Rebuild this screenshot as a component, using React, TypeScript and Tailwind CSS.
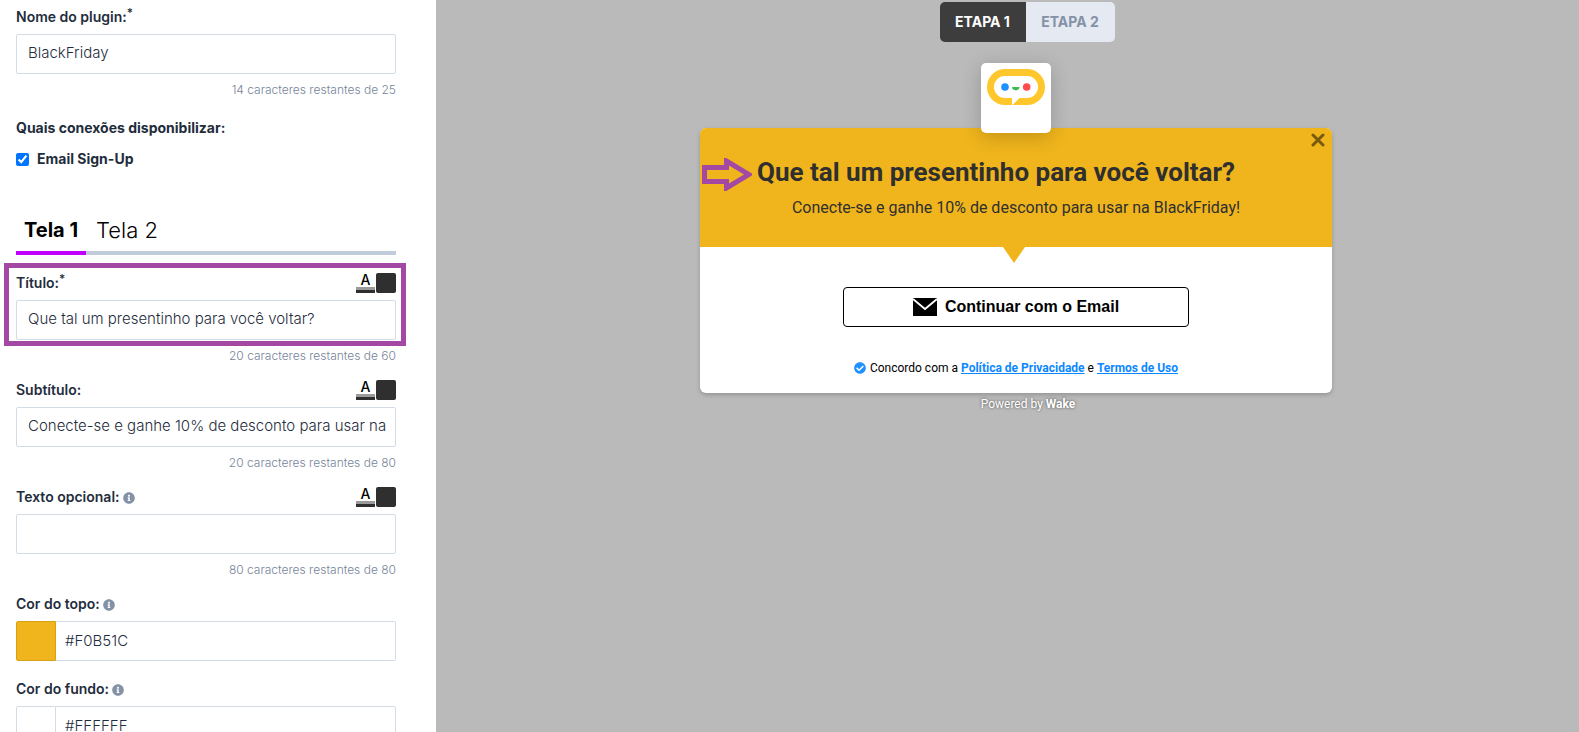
import React, { useState } from 'react'
import { FaInfoCircle, FaCheckCircle } from 'react-icons/fa'

interface TextFieldProps {
  id: string
  label: string
  value: string
  counter: string
  required?: boolean
  info?: boolean
  styled?: boolean
  highlighted?: boolean
}

interface ColorFieldProps {
  id: string
  label: string
  value: string
  swatchClass: string
}

const inputClass =
  'block h-10 w-full rounded-xs border border-[#d3dce6] bg-white pr-2 pb-1 pl-[11px] text-[15px] font-light text-[#1f2d3d] outline-none'

function FieldLabel({ id, label, required, info }: { id: string; label: string; required?: boolean; info?: boolean }) {
  return (
    <label htmlFor={id} className="flex items-center text-sm font-semibold text-[#1f2d3d]">
      {label}
      {required && <span className="mb-2 text-xs leading-none font-medium">*</span>}
      {info && <FaInfoCircle className="mt-px ml-[3px] h-3 w-3 text-[#8492a6]" />}
    </label>
  )
}

// Text color + background color pickers
function StyleButtons() {
  return (
    <div className="flex gap-px">
      <button aria-label="Cor do texto" className="flex h-5 w-[19px] flex-col items-center justify-end">
        <span className="text-sm leading-[14px] font-medium text-black">A</span>
        <span className="h-[3px] w-full shrink-0 bg-[#9b9b9b]" />
        <span className="h-[3px] w-full shrink-0 bg-[#2f2f2f]" />
      </button>
      <button aria-label="Cor" className="h-5 w-5 rounded-xs bg-[#2f2f2f]" />
    </div>
  )
}

function TextField({ id, label, value, counter, required, info, styled, highlighted }: TextFieldProps) {
  const [text, setText] = useState(value)

  return (
    <div className="relative mb-[14px]">
      <div className="mb-[7px] flex h-5 items-center justify-between">
        <FieldLabel id={id} label={label} required={required} info={info} />
        {styled && <StyleButtons />}
      </div>
      <input id={id} className={inputClass} value={text} onChange={(e) => setText(e.target.value)} />
      <p className="mt-[6px] h-5 text-right text-xs leading-5 font-light text-[#76849a]">{counter}</p>
      {highlighted && (
        <div className="pointer-events-none absolute -top-[10px] -right-[10px] -left-3 h-[83px] border-5 border-[#a349a4]" />
      )}
    </div>
  )
}

function ColorField({ id, label, value, swatchClass }: ColorFieldProps) {
  const [color, setColor] = useState(value)

  return (
    <div className="mb-[18px]">
      <div className="mb-[7px] flex h-5 items-center">
        <FieldLabel id={id} label={label} info />
      </div>
      <div className="flex h-10">
        <button aria-label={label} className={`w-10 shrink-0 rounded-l-xs border ${swatchClass}`} />
        <input
          id={id}
          className="h-10 min-w-0 flex-1 rounded-r-xs border border-l-0 border-[#d3dce6] bg-white px-[9px] pb-0.5 text-[15px] font-light text-[#1f2d3d] outline-none"
          value={color}
          onChange={(e) => setColor(e.target.value)}
        />
      </div>
    </div>
  )
}

function BotLogo() {
  return (
    <svg viewBox="0 0 58 36" className="h-9 w-[58px]" aria-hidden="true">
      <rect width="58" height="36" rx="18" fill="#ffc72c" />
      <rect x="7" y="7" width="44" height="22" rx="11" fill="#fff" />
      <path d="M25 28h8.500l-8.500 8.500z" fill="#fff" />
      <circle cx="18" cy="18" r="3.800" fill="#1e90ff" />
      <path d="M25 18h7.600c0 2-1.700 3.300-3.800 3.300S25 20 25 18z" fill="#3dbb4f" />
      <circle cx="39.700" cy="18" r="3.800" fill="#ff4b4b" />
    </svg>
  )
}

function Sidebar() {
  return (
    <aside className="w-[436px] shrink-0 overflow-hidden bg-white pt-[7px] pr-10 pl-4">
      <TextField
        id="nome"
        label="Nome do plugin:"
        value="BlackFriday"
        counter="14 caracteres restantes de 25"
        required
      />

      <fieldset className="mt-[18px]">
        <legend className="h-5 text-sm leading-5 font-bold text-[#1f2d3d]">Quais conexões disponibilizar:</legend>
        <label className="mt-[11px] flex h-5 items-center gap-2 text-sm font-bold text-[#1f2d3d]">
          <input type="checkbox" defaultChecked className="h-[13px] w-[13px]" />
          Email Sign-Up
        </label>
      </fieldset>

      <nav className="mt-11 mb-[18px] flex h-[42px] border-b-4 border-[#c0ccda] text-black">
        <button className="-mb-1 w-[70px] border-b-4 border-[#bf00ff] pb-1 text-xl font-bold">Tela 1</button>
        <button className="px-[10px] pb-1 text-[22px] font-light">Tela 2</button>
      </nav>

      <TextField
        id="titulo"
        label="Título:"
        value="Que tal um presentinho para você voltar?"
        counter="20 caracteres restantes de 60"
        required
        styled
        highlighted
      />
      <TextField
        id="subtitulo"
        label="Subtítulo:"
        value="Conecte-se e ganhe 10% de desconto para usar na"
        counter="20 caracteres restantes de 80"
        styled
      />
      <TextField id="opcional" label="Texto opcional:" value="" counter="80 caracteres restantes de 80" info styled />
      <ColorField id="topo" label="Cor do topo:" value="#F0B51C" swatchClass="border-[#d8a015] bg-[#f0b51c]" />
      <ColorField id="fundo" label="Cor do fundo:" value="#FFFFFF" swatchClass="border-[#d3dce6] bg-white" />
    </aside>
  )
}

function Preview() {
  return (
    <main className="flex min-w-0 flex-1 flex-col items-center bg-[#bababa] pt-0.5 pl-[17px]">
      <div className="ml-[22px] flex h-10 overflow-hidden rounded-[5px] text-sm font-bold">
        <button className="w-[86px] bg-[#3d3d3d] text-white">ETAPA 1</button>
        <button className="w-[89px] bg-[#e5e9f2] text-[#8492a6]">ETAPA 2</button>
      </div>

      <div className="z-10 mt-[21px] -mb-[5px] flex h-[70px] w-[70px] justify-center rounded-[5px] bg-white pt-[6px] shadow-[0_4px_20px_rgba(0,0,0,0.2)]">
        <BotLogo />
      </div>

      <section className="w-full max-w-[632px] rounded-md bg-white font-[Roboto,sans-serif] shadow-[0_2px_4px_rgba(0,0,0,0.2)]">
        <header className="relative flex h-[119px] flex-col items-center rounded-t-md bg-[#f0b51c] pt-7 text-[#2f2f2f]">
          <svg viewBox="0 0 50 33" className="absolute top-[30px] left-0.5 h-[33px] w-[50px]" aria-hidden="true">
            <path
              d="M2.500 9.500H24.500V3L47 16.500L24.500 30V23.500H2.500Z"
              fill="none"
              stroke="#a349a4"
              strokeWidth="5"
            />
          </svg>
          <button aria-label="Fechar" className="absolute top-[5px] right-[7px] h-[14px] w-[14px]">
            <svg viewBox="0 0 14 14" className="h-[14px] w-[14px]">
              <path d="M2 2l10 10M12 2L2 12" stroke="#785a0e" strokeWidth="3" strokeLinecap="round" />
            </svg>
          </button>
          <h1 className="pr-10 text-[26px] leading-8 font-bold">Que tal um presentinho para você voltar?</h1>
          <p className="mt-2 text-base leading-6">Conecte-se e ganhe 10% de desconto para usar na BlackFriday!</p>
          <div className="absolute inset-x-0 top-full flex justify-center pr-1">
            <svg viewBox="0 0 22 16" className="h-4 w-[22px]" aria-hidden="true">
              <path d="M0 0h22L11 16z" fill="#f0b51c" />
            </svg>
          </div>
        </header>

        <div className="flex flex-col items-center pt-10 pb-[15px]">
          <button className="flex h-10 w-[346px] items-center justify-center gap-2 rounded-sm border border-black bg-white font-['Liberation_Sans',Arial,sans-serif] text-base font-bold text-black">
            <svg viewBox="0 0 24 18" className="h-[18px] w-6" aria-hidden="true">
              <rect width="24" height="18" />
              <path d="M0 1l12 10L24 1" fill="none" stroke="#fff" strokeWidth="1.800" />
            </svg>
            Continuar com o Email
          </button>
          <p className="mt-[31px] flex h-5 items-center text-xs text-black">
            <FaCheckCircle className="mr-1 h-3 w-3 text-[#1e90ff]" />
            <span>
              Concordo com a{' '}
              <a href="#privacidade" className="font-bold text-[#0b87ff] underline">Política de Privacidade</a> e{' '}
              <a href="#termos" className="font-bold text-[#0b87ff] underline">Termos de Uso</a>
            </span>
          </p>
        </div>
      </section>

      <p className="mt-[3px] ml-6 font-[Roboto,sans-serif] text-xs leading-4 text-white [text-shadow:0_0_3px_rgba(0,0,0,0.6)]">
        Powered by <b>Wake</b>
      </p>
    </main>
  )
}

export default function App() {
  return (
    <div className="flex h-screen overflow-hidden font-[Inter,sans-serif]">
      <Sidebar />
      <Preview />
    </div>
  )
}
